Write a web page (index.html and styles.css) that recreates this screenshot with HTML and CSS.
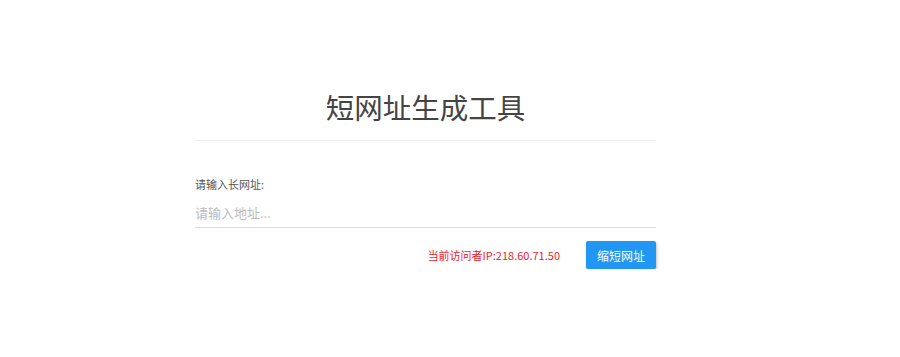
FILE: index.html
```html
<!DOCTYPE html>
<html lang="zh">
<head>
<meta charset="utf-8">
<title>短网址生成工具</title>
<link rel="stylesheet" href="styles.css">
</head>
<body>
<div class="wrap">
  <h1 class="title">短网址生成工具</h1>
  <form class="form">
    <label class="label" for="url">请输入长网址:</label>
    <input class="input" id="url" type="text" placeholder="请输入地址...">
    <div class="actions">
      <span class="ip">当前访问者IP:218.60.71.50</span>
      <button class="btn" type="button">缩短网址</button>
    </div>
  </form>
</div>
</body>
</html>
```
FILE: styles.css
```css
html, body {
  margin: 0;
  padding: 0;
  background: #fff;
  font-family: "Noto Sans CJK SC", "Noto Sans", sans-serif;
}
.wrap {
  width: 461px;
  margin: 0 0 0 195px;
  padding-top: 86px;
}
.title {
  margin: 0;
  font-size: 28.5px;
  font-weight: 400;
  color: #444;
  text-align: center;
  line-height: 42px;
  padding-bottom: 12px;
  border-bottom: 1px solid #eee;
}
.form {
  display: flex;
  flex-direction: column;
  padding-top: 35px;
}
.label {
  font-size: 11px;
  color: #555;
  line-height: 16px;
}
.input {
  margin-top: 11px;
  border: 0;
  border-bottom: 1px solid #ddd;
  padding: 0 0 4px 0;
  font-family: inherit;
  font-size: 13px;
  line-height: 20px;
  outline: none;
  color: #333;
}
.input::placeholder {
  color: #bbb;
}
.actions {
  display: flex;
  align-items: center;
  justify-content: flex-end;
  gap: 26px;
  margin-top: 13px;
}
.ip {
  font-size: 11px;
  color: #f0202a;
}
.btn {
  width: 70px;
  height: 28px;
  border: 0;
  border-radius: 2px;
  background: #2196f3;
  color: #fff;
  font-family: inherit;
  font-size: 12px;
  box-shadow: 1px 2px 3px rgba(0,0,0,0.25);
  padding: 0;
}
```
